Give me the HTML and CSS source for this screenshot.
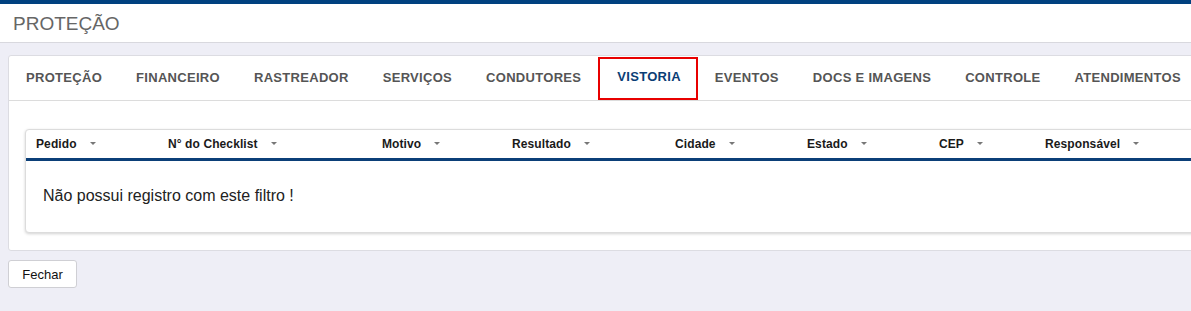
FILE: index.html
```html
<!DOCTYPE html>
<html lang="pt-BR">
<head>
<meta charset="utf-8">
<title>Proteção</title>
<link rel="stylesheet" href="styles.css">
</head>
<body>
<header class="page-header">
  <h1 class="page-title">PROTEÇÃO</h1>
</header>
<main class="content">
  <section class="card">
    <nav class="tabs">
      <a class="tab">PROTEÇÃO</a>
      <a class="tab">FINANCEIRO</a>
      <a class="tab">RASTREADOR</a>
      <a class="tab">SERVIÇOS</a>
      <a class="tab">CONDUTORES</a>
      <a class="tab tab-active">VISTORIA</a>
      <a class="tab">EVENTOS</a>
      <a class="tab">DOCS E IMAGENS</a>
      <a class="tab">CONTROLE</a>
      <a class="tab">ATENDIMENTOS</a>
    </nav>
    <div class="card-body">
      <div class="grid">
        <div class="grid-head">
          <div class="th">Pedido<span class="caret"></span></div>
          <div class="th">N° do Checklist<span class="caret"></span></div>
          <div class="th">Motivo<span class="caret"></span></div>
          <div class="th">Resultado<span class="caret"></span></div>
          <div class="th">Cidade<span class="caret"></span></div>
          <div class="th">Estado<span class="caret"></span></div>
          <div class="th">CEP<span class="caret"></span></div>
          <div class="th">Responsável<span class="caret"></span></div>
        </div>
        <div class="grid-empty">Não possui registro com este filtro !</div>
      </div>
    </div>
  </section>
  <button class="btn">Fechar</button>
</main>
</body>
</html>
```
FILE: styles.css
```css
* { box-sizing: border-box; }
html, body { margin: 0; padding: 0; }
body {
  background: #eeeef6;
  font-family: "Liberation Sans", Arial, sans-serif;
  color: #222;
  overflow: hidden;
  width: 1191px;
  height: 311px;
}
.page-header {
  border-top: 4px solid #00417f;
  background: #fff;
  height: 43px;
  border-bottom: 1px solid #d8d8de;
  padding: 0 13px;
  display: flex;
  align-items: center;
}
.page-title {
  margin: 0;
  font-size: 19px;
  font-weight: normal;
  color: #666;
  letter-spacing: 0;
  padding-top: 1px;
}
.content {
  padding: 12px 8px 0 8px;
}
.card {
  width: 1240px;
  background: #fff;
  border: 1px solid #dcdce2;
  border-radius: 3px;
}
.tabs {
  display: flex;
  height: 45px;
  border-bottom: 1px solid #dcdcdc;
}
.tab {
  display: flex;
  align-items: center;
  padding: 0 15px 4px 15px;
  font-size: 13px;
  font-weight: bold;
  letter-spacing: 0.3px;
  color: #555;
  white-space: nowrap;
  border: 2px solid transparent;
  border-bottom: 0;
  margin-top: 1px;
}
.tab-active {
  color: #0a3d75;
  border: 2px solid #e80000;
  padding-left: 17px;
  padding-right: 15px;
}
.card-body {
  padding: 28px 16px 17px 16px;
}
.grid {
  border: 1px solid #dcdcdc;
  border-radius: 4px;
  box-shadow: 0 1px 3px rgba(0, 0, 0, 0.18);
  background: #fff;
}
.grid-head {
  display: grid;
  grid-template-columns: 132px 214px 130px 163px 132px 132px 106px 1fr;
  height: 31px;
  border-bottom: 3px solid #0b3f78;
}
.th {
  display: flex;
  align-items: center;
  padding-left: 10px;
  padding-bottom: 1px;
  font-size: 12px;
  font-weight: bold;
  letter-spacing: 0.1px;
  color: #1a1a1a;
  white-space: nowrap;
}
.caret {
  display: inline-block;
  margin-left: 13px;
  width: 0;
  height: 0;
  border-left: 3px solid transparent;
  border-right: 3px solid transparent;
  border-top: 3px solid #777;
}
.grid-empty {
  height: 71px;
  display: flex;
  align-items: center;
  padding-left: 17px;
  padding-bottom: 1px;
  font-size: 16px;
  color: #222;
}
.btn {
  margin-top: 9px;
  width: 69px;
  height: 28px;
  background: #fff;
  border: 1px solid #cfcfd4;
  border-radius: 3px;
  font-family: "Liberation Sans", Arial, sans-serif;
  font-size: 13px;
  color: #111;
  padding: 0;
}
```
